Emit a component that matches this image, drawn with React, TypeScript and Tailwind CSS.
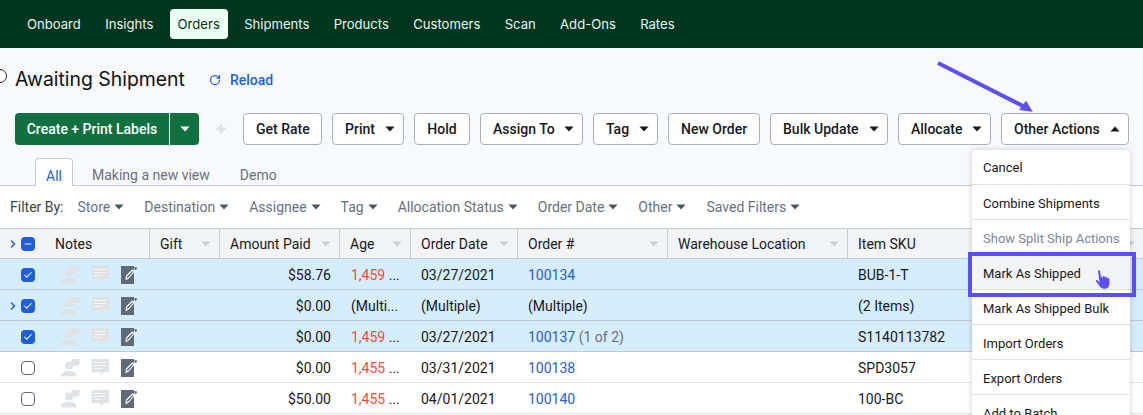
import { Check, Minus, ChevronRight, RotateCw, Zap } from 'lucide-react'

const roboto = "font-['Roboto',sans-serif]"

function Caret({ up = false, className = '' }: { up?: boolean; className?: string }) {
  return (
    <svg width="10" height="6" viewBox="0 0 12 7" className={className}>
      <path d={up ? 'M6 0.5 L11.5 6.5 H0.5 Z' : 'M0.5 0.5 H11.5 L6 6.5 Z'} fill="currentColor" />
    </svg>
  )
}

function Btn({ label, caret, up, w }: { label: string; caret?: boolean; up?: boolean; w: string }) {
  return (
    <button className={`flex h-8 items-center justify-between whitespace-nowrap rounded border border-[#a9b1ba] bg-white pl-[12px] pr-[8px] text-[14px] font-medium text-[#17191c] ${w}`}>
      <span className={caret ? '' : 'w-full pr-[4px] text-center'}>{label}</span>
      {caret && <Caret up={up} className="text-[#17191c]" />}
    </button>
  )
}

function PersonIcon() {
  return (
    <svg width="19" height="18" viewBox="0 0 19 18" fill="#dfe3e6">
      <path d="M10.500 0h8v6h-3l-2.500 2.200v-2.200h-2.500z" />
      <circle cx="8" cy="6.500" r="4" />
      <path d="M0 17.500c0-3.500 2.500-4.500 5-5.500h6c2 .8 4.500 2 4.500 5.500z" />
    </svg>
  )
}

function ChatIcon() {
  return (
    <svg width="19" height="18" viewBox="0 0 19 18">
      <path d="M0.500 0h17.500v13h-5l-3.500 3.500v-3.500h-9z" fill="#dfe3e6" />
      <path d="M3 3.500h12M3 6.500h12M3 9.500h8" stroke="#f4f6f8" strokeWidth="1" />
    </svg>
  )
}

function NoteIcon() {
  return (
    <svg width="18" height="18" viewBox="0 0 18 18">
      <rect x="0" y="0" width="13" height="18" fill="#5f6b78" />
      <path d="M5 13.500 L5.500 10 L11.500 4 L13 5.500 L8 11.500 Z" fill="none" stroke="#fff" strokeWidth="1.100" strokeLinejoin="round" />
      <path d="M13 1.500 L15.500 1 L16 3 L14 4 Z" fill="#5f6b78" />
    </svg>
  )
}

function Box({ state }: { state: 'checked' | 'mixed' | 'empty' }) {
  if (state === 'empty') return <span className="h-[14px] w-[14px] rounded-sm border border-[#5f6b78] bg-white" />
  return (
    <span className="flex h-[14px] w-[14px] items-center justify-center rounded-sm bg-[#1f5fdc] text-white">
      {state === 'checked' ? <Check size={10} strokeWidth={2.5} /> : <Minus size={10} strokeWidth={2.5} />}
    </span>
  )
}

const cols = 'grid-cols-[150px_70px_120px_71px_107px_150px_180px_1fr]'

const rows = [
  { sel: true, more: false, amt: '$58.76', age: '1,459', date: '03/27/2021', order: '100134', extra: '', sku: 'BUB-1-T' },
  { sel: true, more: true, amt: '$0.00', age: '', date: '(Multiple)', order: '', extra: '', sku: '(2 Items)' },
  { sel: true, more: false, amt: '$0.00', age: '1,459', date: '03/27/2021', order: '100137', extra: '(1 of 2)', sku: 'S1140113782' },
  { sel: false, more: false, amt: '$0.00', age: '1,455', date: '03/31/2021', order: '100138', extra: '', sku: 'SPD3057' },
  { sel: false, more: false, amt: '$50.00', age: '1,455', date: '04/01/2021', order: '100140', extra: '', sku: '100-BC' },
]

const heads = ['Gift', 'Amount Paid', 'Age', 'Order Date', 'Order #', 'Warehouse Location', 'Item SKU']

export default function App() {
  return (
    <div className={`relative h-[415px] w-[1143px] overflow-hidden bg-[#f8f9fc] ${roboto}`}>
      <nav className="flex h-12 items-center gap-[8.3px] bg-[#00351f] pl-[19px] font-['Inter',sans-serif] text-[13.1px] text-[#e8f5ee]">
        {['Onboard', 'Insights', 'Orders', 'Shipments', 'Products', 'Customers', 'Scan', 'Add-Ons', 'Rates'].map(n => (
          <a
            key={n}
            className={`flex h-[30px] items-center rounded px-[8px] pt-[1px] ${n === 'Orders' ? 'bg-[#ecfdf3] text-[#00351f]' : ''}`}
          >
            {n}
          </a>
        ))}
      </nav>

      <div className="flex h-[62px] items-center pl-[15px] pt-[2px]">
        <h1 className="font-['Inter',sans-serif] text-[19.4px] leading-none text-[#111]">Awaiting Shipment</h1>
        <a className="ml-6 flex items-center gap-[9px] text-[14px] font-medium text-[#1f5fdc]">
          <RotateCw size={12} strokeWidth={2.5} />
          Reload
        </a>
      </div>

      <div className="mt-[3px] flex h-8 items-center gap-[10px] pl-[15px]">
        <div className="flex h-8 w-[184px] overflow-hidden rounded bg-[#107040] text-[14px] font-medium text-white">
          <span className="flex w-[155px] items-center justify-center border-r border-white">Create + Print Labels</span>
          <span className="flex flex-1 items-center justify-center"><Caret /></span>
        </div>
        <span className="flex w-[24px] justify-center text-[#dde1e6]"><Zap size={12} fill="currentColor" /></span>
        <Btn label="Get Rate" w="w-[79px]" />
        <Btn label="Print" caret w="w-[72px]" />
        <Btn label="Hold" w="w-[56px]" />
        <Btn label="Assign To" caret w="w-[103px]" />
        <Btn label="Tag" caret w="w-[65px]" />
        <Btn label="New Order" w="w-[92px]" />
        <Btn label="Bulk Update" caret w="w-[118px]" />
        <Btn label="Allocate" caret w="w-[93px]" />
        <Btn label="Other Actions" caret up w="w-[128px]" />
      </div>

      <div className="mt-[13px] flex h-[28px] items-end border-b border-[#c4ccd4] pl-[35px] text-[14px] text-[#66727f]">
        <span className="mb-[-1px] flex h-[28px] w-[38px] items-center justify-center rounded-t border border-b-0 border-[#c4ccd4] bg-white pt-[7px] text-[#1f5fdc]">All</span>
        <span className="flex h-[27px] items-center pl-[19px] pt-[7px]">Making a new view</span>
        <span className="flex h-[27px] items-center pl-[30px] pt-[7px]">Demo</span>
      </div>

      <div className="flex h-[42px] items-center bg-white pl-[10px] text-[14px] text-[#66727f]">
        <span className="mr-[14px] text-[#3c444d]">Filter By:</span>
        {['Store', 'Destination', 'Assignee', 'Tag', 'Allocation Status', 'Order Date', 'Other', 'Saved Filters'].map(f => (
          <span key={f} className="mr-[20px] flex items-center gap-[4px]">
            {f}
            <Caret className="text-[#4c5762]" />
          </span>
        ))}
      </div>

      <div className={`grid h-[31px] ${cols} border-y border-[#c4ccd4] bg-[#f3f4f6] text-[14px] text-[#17191c]`}>
        <div className="flex items-center border-r border-[#c4ccd4] pl-[7px] pt-[1px]">
          <ChevronRight size={12} strokeWidth={3} className="text-[#1f5fdc]" />
          <span className="ml-[2px] flex"><Box state="mixed" /></span>
          <span className="ml-[20px]">Notes</span>
        </div>
        {heads.map(h => (
          <div key={h} className="flex items-center justify-between border-r border-[#c4ccd4] pl-[10px] pr-[8px] pt-[1px] last:border-r-0">
            {h}
            <Caret className="text-[#c9d0d6]" />
          </div>
        ))}
      </div>

      {rows.map(r => (
        <div
          key={r.order || 'multi'}
          className={`grid h-[31px] ${cols} items-center border-b pt-[2px] text-[14px] text-[#17191c] ${r.sel ? 'border-[#c0cad3] bg-[#d6edfc]' : 'border-[#e3e6ea] bg-white'}`}
        >
          <div className="flex items-center pl-[7px]">
            <span className="flex w-[12px]">
              {r.more && <ChevronRight size={12} strokeWidth={3} className="text-[#1f5fdc]" />}
            </span>
            <span className="ml-[2px] flex"><Box state={r.sel ? 'checked' : 'empty'} /></span>
            <span className="ml-[26px] flex items-center gap-[11px]">
              <PersonIcon />
              <ChatIcon />
              <NoteIcon />
            </span>
          </div>
          <div />
          <div className="pr-[9px] text-right">{r.amt}</div>
          <div className="truncate pl-[11px]">
            {r.age ? <><span className="text-[#f04e30]">{r.age}</span> ...</> : '(Multi...'}
          </div>
          <div className="pl-[10px]">{r.date}</div>
          <div className="pl-[10px]">
            {r.order ? <span className="text-[#1f5fdc]">{r.order}</span> : '(Multiple)'}
            {r.extra && <span className="text-[#66727f]"> {r.extra}</span>}
          </div>
          <div />
          <div className="pl-[10px]">{r.sku}</div>
        </div>
      ))}

      {/* dropdown menu over the table */}
      <div className="absolute left-[972px] top-[150px] w-[158px] rounded-t bg-white text-[13px] text-[#17191c] shadow-[0_0_6px_rgba(0,0,0,0.18)]">
        {['Cancel', 'Combine Shipments', 'Show Split Ship Actions', 'Mark As Shipped', 'Mark As Shipped Bulk', 'Import Orders', 'Export Orders', 'Add to Batch'].map(m => (
          <div
            key={m}
            className={`flex h-[35px] items-center border-b border-[#dfe3e8] pl-[11px] pt-[3px] first:pt-[2px] ${m === 'Mark As Shipped' ? 'bg-[#f3f4f6]' : ''} ${m.startsWith('Show') ? 'text-[#7b8794]' : ''}`}
          >
            {m}
          </div>
        ))}
      </div>

      {/* annotation on top of the screenshot */}
      <div className="absolute left-[968px] top-[252px] h-[45px] w-[168px] border-[4px] border-[#5b4ff5]" />
      <svg className="absolute left-[1095px] top-[270px]" width="17" height="20" viewBox="0 0 17 20" fill="#5b4ff5">
        <path d="M3 1c0-1 2-1 2 0l1 6 1-.3V7l.6 1 .4-1.600c.6-.6 1.600-.4 1.800.4l.2 1.200.5-1c.7-.4 1.500 0 1.600.7l.2 1.100.5-.6c.8-.3 1.500.3 1.500 1l.1 4.800c0 2.500-1.800 4.800-4.800 4.800-2.500 0-4-1-5-2.800L1 11.500c-.5-1 .8-2 1.800-1l1.700 2.200z" />
      </svg>
      <svg className="absolute left-[930px] top-[55px]" width="110" height="60" viewBox="0 0 110 60" fill="none">
        <path d="M8 8 L95 52" stroke="#5b4ff5" strokeWidth="4" />
        <path d="M102.700 56.700 L96 45.700 L89 55 Z" fill="#5b4ff5" />
      </svg>
      {/* the radio circle clipped at the page's left edge */}
      <span className="absolute left-[-7px] top-[69px] h-[14px] w-[14px] rounded-full border border-[#222] bg-white" />
    </div>
  )
}
